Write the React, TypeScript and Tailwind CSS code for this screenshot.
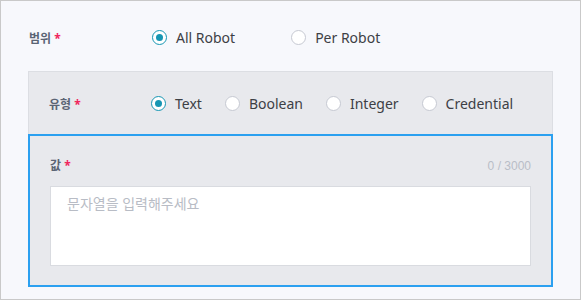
import { useState } from "react";

const font = { fontFamily: '"Noto Sans", "Noto Sans CJK KR", sans-serif' };

function Radio({ label, checked, onClick }: { label: string; checked: boolean; onClick: () => void }) {
  return (
    <label className="flex items-center cursor-pointer" onClick={onClick}>
      <span
        className={
          checked
            ? "w-[15px] h-[15px] rounded-full border-[1.5px] border-[#1696b3] bg-white flex items-center justify-center"
            : "w-[15px] h-[15px] rounded-full border border-[#c6c9d2] bg-white"
        }
      >
        {checked && <span className="w-[7px] h-[7px] rounded-full bg-[#1696b3]" />}
      </span>
      <span className="ml-[9px] text-[14px] text-[#3d4045]">{label}</span>
    </label>
  );
}

function Label({ text }: { text: string }) {
  return (
    <span className="text-[12px] font-bold text-[#5b6474]">
      {text} <span className="text-[#f0245c]">*</span>
    </span>
  );
}

export default function App() {
  const [scope, setScope] = useState("all");
  const [type, setType] = useState("Text");
  const [value, setValue] = useState("");

  return (
    <div
      style={font}
      className="w-[581px] h-[300px] border border-[#c9c9c9] bg-[#f7f8fc] px-[27px] pb-[11px]"
    >
      <div className="flex items-center h-[70px] pt-[2px] pl-[1px]">
        <div className="w-[123px]">
          <Label text="범위" />
        </div>
        <div className="flex gap-[56px]">
          <Radio label="All Robot" checked={scope === "all"} onClick={() => setScope("all")} />
          <Radio label="Per Robot" checked={scope === "per"} onClick={() => setScope("per")} />
        </div>
      </div>

      <div className="border border-[#dcdee3] bg-[#e8e9ed]">
        <div className="flex items-center h-[62px] pl-[20px]">
          <div className="w-[102px]">
            <Label text="유형" />
          </div>
          <div className="flex gap-[23px]">
            {["Text", "Boolean", "Integer", "Credential"].map((t) => (
              <Radio key={t} label={t} checked={type === t} onClick={() => setType(t)} />
            ))}
          </div>
        </div>

        <div className="-mx-px -mb-px border-2 border-[#2ba0f0] px-[20px] pt-[22px] pb-[19px]">
          <div className="flex items-center justify-between h-[16px] mb-[12px]">
            <Label text="값" />
            <span
              className="text-[12px] text-[#b9bdc7]"
              style={{ fontFamily: '"Liberation Sans", Arial, sans-serif' }}
            >
              {value.length} / 3000
            </span>
          </div>
          <textarea
            value={value}
            onChange={(e) => setValue(e.target.value.slice(0, 3000))}
            placeholder="문자열을 입력해주세요"
            className="block w-full h-[80px] resize-none border border-[#d9dbe0] bg-white px-[16px] py-[6px] text-[14px] text-[#3a3d42] placeholder:text-[#b8bcc5] outline-none"
          />
        </div>
      </div>
    </div>
  );
}
